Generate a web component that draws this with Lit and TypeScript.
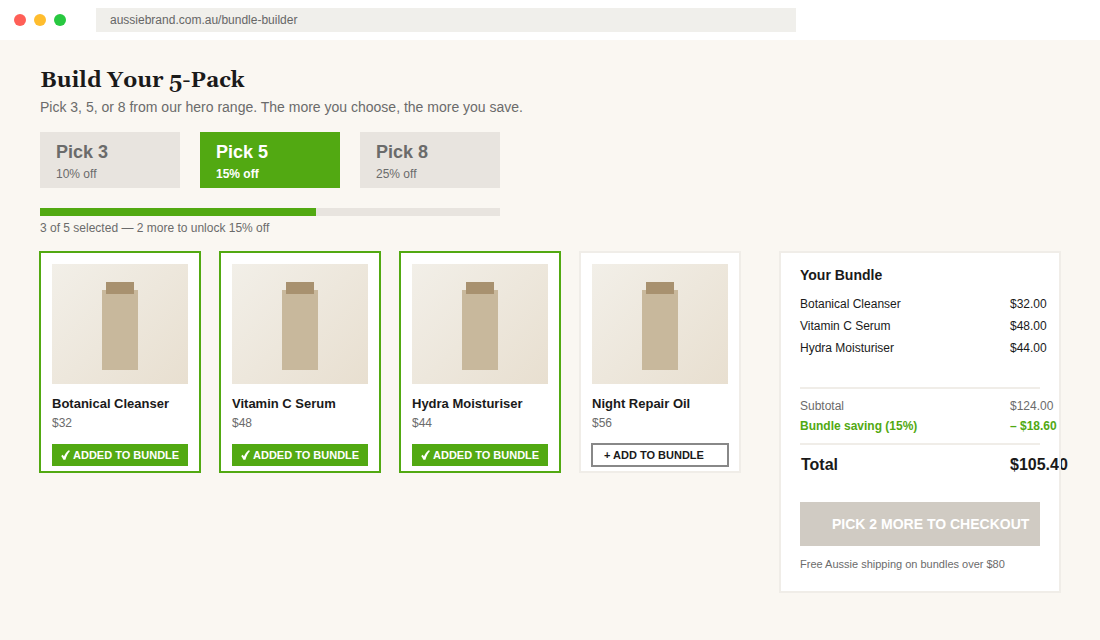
import { LitElement, html, css } from "lit";
import { customElement } from "lit/decorators.js";

const tiers = [
  { name: "Pick 3", off: "10% off", active: false },
  { name: "Pick 5", off: "15% off", active: true },
  { name: "Pick 8", off: "25% off", active: false },
];
const products = [
  { name: "Botanical Cleanser", price: "$32", added: true },
  { name: "Vitamin C Serum", price: "$48", added: true },
  { name: "Hydra Moisturiser", price: "$44", added: true },
  { name: "Night Repair Oil", price: "$56", added: false },
];
const lines = [
  ["Botanical Cleanser", "$32.00"],
  ["Vitamin C Serum", "$48.00"],
  ["Hydra Moisturiser", "$44.00"],
];

@customElement("app-root")
export class AppRoot extends LitElement {
  static styles = css`
    :host { display: block; width: 1100px; height: 640px; overflow: hidden; background: #faf7f2; font-family: "Liberation Sans", Arial, sans-serif; color: #1a1a1a; }
    * { box-sizing: border-box; }
    .chrome { height: 40px; background: #fff; display: flex; align-items: center; padding-left: 14px; }
    .dots { display: flex; gap: 8px; width: 82px; }
    .dot { width: 12px; height: 12px; border-radius: 50%; }
    .r { background: #ff5f57; } .y { background: #ffbd2e; } .g { background: #28c840; }
    .url { width: 700px; height: 24px; background: #f0efeb; padding-left: 14px; font-size: 12px; line-height: 24px; color: #666; }
    main { padding: 29px 40px 0; }
    h1 { margin: 0; font: bold 22px/24px Georgia, "Gelasio", "Liberation Serif", serif; color: #1a1a1a; }
    .sub { margin-top: 6px; font-size: 14px; line-height: 16px; color: #6b6b6b; }
    .tiers { display: flex; gap: 20px; margin-top: 17px; }
    .tier { width: 140px; height: 56px; background: #e8e4df; color: #6b6b6b; padding: 10px 16px 0; }
    .tier.on { background: #52a912; color: #fff; }
    .tier b { display: block; font-size: 18px; line-height: 20px; }
    .tier span { display: block; margin-top: 5px; font-size: 12px; line-height: 14px; }
    .tier.on span { font-weight: bold; }
    .track { width: 460px; height: 8px; background: #e8e4df; margin-top: 20px; }
    .fill { height: 100%; background: #52a912; }
    .status { margin-top: 5px; font-size: 12px; line-height: 14px; color: #6b6b6b; }
    .body { display: flex; gap: 40px; margin-top: 17px; align-items: flex-start; }
    .grid { display: flex; gap: 20px; }
    .card { width: 160px; height: 220px; background: #fff; padding: 12px; outline: 2px solid #f0ede8; outline-offset: -1px; }
    .card.sel { outline-color: #52a912; }
    .img { height: 120px; background: linear-gradient(135deg, #f2efe8, #e8dfd0); display: flex; justify-content: center; padding-top: 26px; }
    .bottle { position: relative; width: 36px; height: 80px; background: #c8b89c; }
    .cap { position: absolute; left: 4px; top: -8px; width: 28px; height: 12px; background: #a8916f; }
    .pname { margin-top: 12px; font-size: 13px; line-height: 16px; font-weight: bold; color: #1a1a1a; }
    .pprice { margin-top: 4px; font-size: 12px; line-height: 14px; color: #6b6b6b; }
    .btn { margin-top: 14px; height: 22px; font-size: 11px; font-weight: bold; line-height: 22px; white-space: nowrap; display: flex; align-items: center; }
    .btn.added { background: #52a912; color: #fff; padding-left: 9px; }
    .btn.add { background: #fff; color: #1a1a1a; outline: 2px solid #888; outline-offset: -1px; padding-left: 12px; }
    .tick { width: 9px; height: 10px; margin-right: 3px; flex: none; fill: #fff; }
    .panel { width: 280px; height: 340px; background: #fff; padding: 15px 20px; outline: 2px solid #f0ede8; outline-offset: -1px; }
    h2 { margin: 0; font-size: 14px; line-height: 16px; font-weight: bold; color: #1a1a1a; }
    .row { display: flex; white-space: nowrap; }
    .row > :first-child { width: 210px; flex: none; }
    .items { margin-top: 10px; height: 94px; }
    .item { font-size: 12px; line-height: 14px; padding: 4px 0; color: #1a1a1a; }
    .rule { height: 2px; background: #f0ede8; }
    .sum { font-size: 12px; line-height: 14px; color: #6b6b6b; margin-top: 10px; }
    .save { color: #52a912; font-weight: bold; margin-top: 6px; }
    .rule.mid { margin-top: 10px; }
    .total { font-size: 16px; line-height: 18px; font-weight: bold; margin-top: 11px; color: #1a1a1a; }
    .total > :first-child { padding-left: 1px; }
    .cta { margin-top: 28px; height: 44px; background: #d0cbc3; color: #fff; font-size: 14px; line-height: 44px; font-weight: bold; padding-left: 32px; white-space: nowrap; }
    .note { margin-top: 12px; font-size: 11px; line-height: 13px; color: #6b6b6b; }
  `;

  render() {
    return html`
      <div class="chrome">
        <div class="dots"><div class="dot r"></div><div class="dot y"></div><div class="dot g"></div></div>
        <div class="url">aussiebrand.com.au/bundle-builder</div>
      </div>
      <main>
        <h1>Build Your 5-Pack</h1>
        <div class="sub">Pick 3, 5, or 8 from our hero range. The more you choose, the more you save.</div>
        <div class="tiers">
          ${tiers.map((t) => html`<div class="tier ${t.active ? "on" : ""}"><b>${t.name}</b><span>${t.off}</span></div>`)}
        </div>
        <div class="track"><div class="fill" style="width: ${(3 / 5) * 100}%"></div></div>
        <div class="status">3 of 5 selected — 2 more to unlock 15% off</div>
        <div class="body">
          <div class="grid">
            ${products.map(
              (p) => html`<div class="card ${p.added ? "sel" : ""}">
                <div class="img"><div class="bottle"><div class="cap"></div></div></div>
                <div class="pname">${p.name}</div>
                <div class="pprice">${p.price}</div>
                ${p.added
                  ? html`<div class="btn added"><svg class="tick" viewBox="0 0 9 10"><path d="M0.2 6 L1.7 4.8 L3 6.4 C4 4 5.6 1.8 7.8 0.2 L9 1 C7 3.2 5.4 6.2 4.4 9.8 L2.4 9.8 C1.8 8.4 1 7.2 0.2 6 Z"></path></svg>ADDED TO BUNDLE</div>`
                  : html`<div class="btn add">+ ADD TO BUNDLE</div>`}
              </div>`
            )}
          </div>
          <div class="panel">
            <h2>Your Bundle</h2>
            <div class="items">
              ${lines.map((l) => html`<div class="row item"><span>${l[0]}</span><span>${l[1]}</span></div>`)}
            </div>
            <div class="rule"></div>
            <div class="row sum"><span>Subtotal</span><span>$124.00</span></div>
            <div class="row sum save"><span>Bundle saving (15%)</span><span>– $18.60</span></div>
            <div class="rule mid"></div>
            <div class="row total"><span>Total</span><span>$105.40</span></div>
            <div class="cta">PICK 2 MORE TO CHECKOUT</div>
            <div class="note">Free Aussie shipping on bundles over $80</div>
          </div>
        </div>
      </main>
    `;
  }
}
